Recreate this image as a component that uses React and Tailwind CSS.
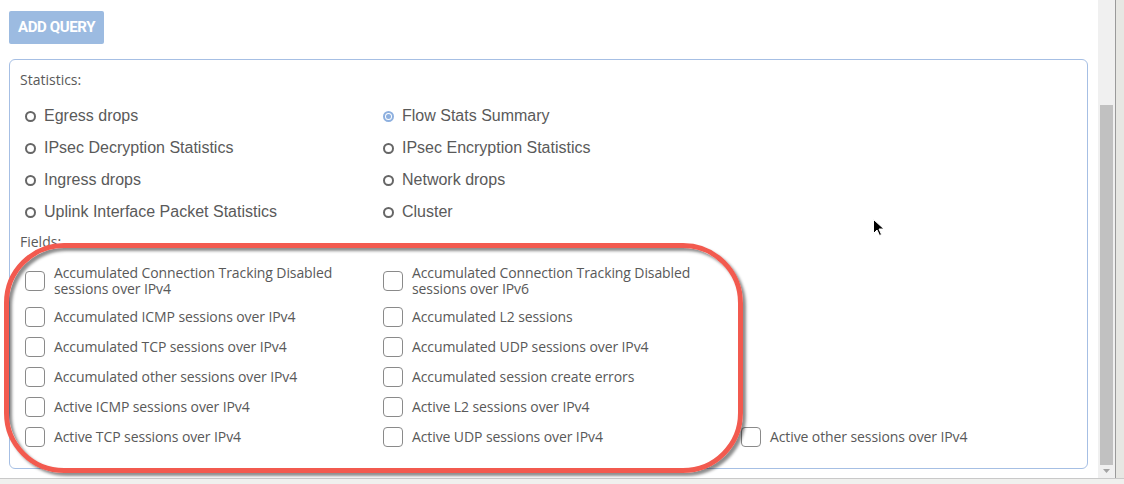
import React from 'react';

const statistics = [
  { label: 'Egress drops' },
  { label: 'Flow Stats Summary', checked: true },
  { label: 'IPsec Decryption Statistics' },
  { label: 'IPsec Encryption Statistics' },
  { label: 'Ingress drops' },
  { label: 'Network drops' },
  { label: 'Uplink Interface Packet Statistics' },
  { label: 'Cluster' },
];

// null = empty cell in the 3-column field grid
const fields = [
  ['Accumulated Connection Tracking Disabled sessions over IPv4', 'Accumulated Connection Tracking Disabled sessions over IPv6', null],
  ['Accumulated ICMP sessions over IPv4', 'Accumulated L2 sessions', null],
  ['Accumulated TCP sessions over IPv4', 'Accumulated UDP sessions over IPv4', null],
  ['Accumulated other sessions over IPv4', 'Accumulated session create errors', null],
  ['Active ICMP sessions over IPv4', 'Active L2 sessions over IPv4', null],
  ['Active TCP sessions over IPv4', 'Active UDP sessions over IPv4', 'Active other sessions over IPv4'],
];

const fira = { fontFamily: '"Open Sans", "Noto Sans", sans-serif' };

function Radio({ label, checked }) {
  return (
    <div className="flex items-center h-[32px] pl-[5px]">
      {checked ? (
        <span className="w-[11px] h-[11px] rounded-full border-2 border-[#8eb0df] flex items-center justify-center shrink-0">
          <span className="w-[5px] h-[5px] rounded-full bg-[#8eb0df]" />
        </span>
      ) : (
        <span className="w-[11px] h-[11px] rounded-full border-2 border-[#666] shrink-0" />
      )}
      <span className="ml-[8px] text-[16px] text-[#5a5a5a] font-['Liberation_Sans',Arial,sans-serif]">{label}</span>
    </div>
  );
}

function FieldCheck({ label }) {
  if (!label) return <div />;
  return (
    <div className="flex items-center pl-[5px]">
      <span className="w-[20px] h-[20px] rounded-[4px] border border-[#8a8a8a] bg-white shrink-0" />
      <span className="ml-[9px] text-[14px] leading-[16px] text-[#595959] w-[300px] tracking-[-0.1px]" style={fira}>
        {label}
      </span>
    </div>
  );
}

export default function App() {
  return (
    <div className="relative w-[1124px] h-[484px] overflow-hidden bg-white flex flex-col">
      <div className="flex flex-1 min-h-0">
        {/* main content */}
        <div className="w-[1098px] pl-[9px] pt-[11px]">
          <button className="w-[95px] h-[33px] rounded-[2px] bg-[#9cbbe1] text-white text-[15px] font-bold uppercase tracking-tight font-['Roboto',sans-serif]">
            Add Query
          </button>

          <div className="mt-[15px] w-[1079px] h-[410px] border border-[#a6bfe4] rounded-[6px] pl-[10px] pt-[10px]">
            <div className="h-[20px] text-[14px] leading-[20px] text-[#595959]" style={fira}>Statistics:</div>
            <div className="mt-[10px] grid grid-cols-[358px_358px]">
              {statistics.map((s) => (
                <Radio key={s.label} {...s} />
              ))}
            </div>
            <div className="mt-[4px] h-[20px] text-[14px] leading-[20px] text-[#595959]" style={fira}>Fields:</div>
            <div className="mt-[8px] grid grid-cols-[358px_358px_358px] grid-rows-[42px_30px_30px_30px_30px_30px]">
              {fields.flat().map((f, i) => (
                <FieldCheck key={i} label={f} />
              ))}
            </div>
          </div>
        </div>

        {/* scrollbar */}
        <div className="w-[17px] bg-[#f0f0f0] flex flex-col items-center pt-[105px] pb-[4px]">
          <div className="w-[13px] flex-1 bg-[#c1c1c1]" />
          <svg width="9" height="6" viewBox="0 0 9 6" className="mt-[3px]">
            <path d="M1 1h7L4.5 5z" fill="#a3a3a3" />
          </svg>
        </div>
        <div className="w-[1px] bg-[#9a9a9a]" />
        <div className="flex-1 bg-[#e7e7e3]" />
      </div>
      <div className="h-[1px] bg-[#c9c9c9]" />
      <div className="h-[5px] bg-[#f0f0ee]" />

      {/* red annotation outline */}
      <div className="absolute left-[4px] top-[243px] w-[739px] h-[230px] rounded-[60px] border-[5px] border-[#f25a4f] shadow-[3px_3px_3px_rgba(0,0,0,0.45),inset_3px_3px_3px_rgba(0,0,0,0.45)] pointer-events-none" />

      {/* mouse cursor */}
      <svg className="absolute left-[873px] top-[219px]" width="12" height="18" viewBox="0 0 12 18">
        <path d="M0.5 0.5v14l3.5-3.5 2.5 5.5 2-1-2.5-5.5h5z" fill="#000" stroke="#fff" strokeWidth="1" />
      </svg>
    </div>
  );
}
